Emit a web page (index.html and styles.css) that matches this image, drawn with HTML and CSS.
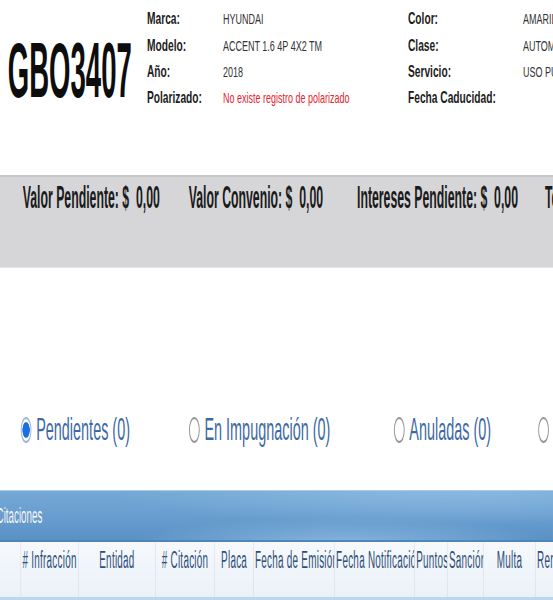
FILE: index.html
```html
<!DOCTYPE html>
<html lang="es">
<head>
<meta charset="utf-8">
<title>Consulta de vehículo</title>
<link rel="stylesheet" href="styles.css">
</head>
<body>
<section class="info">
  <div class="plate-col"><span class="plate">GBO3407</span></div>
  <dl class="specs">
    <dt>Marca:</dt><dd>HYUNDAI</dd><dt>Color:</dt><dd>AMARILLO</dd>
    <dt>Modelo:</dt><dd>ACCENT 1.6 4P 4X2 TM</dd><dt>Clase:</dt><dd>AUTOMOVIL</dd>
    <dt>Año:</dt><dd>2018</dd><dt>Servicio:</dt><dd>USO PUBLICO</dd>
    <dt>Polarizado:</dt><dd class="warn">No existe registro de polarizado</dd><dt>Fecha Caducidad:</dt><dd></dd>
  </dl>
</section>

<section class="totals">
  <span>Valor Pendiente: $&nbsp; 0,00</span>
  <span>Valor Convenio: $&nbsp; 0,00</span>
  <span>Intereses Pendiente: $&nbsp; 0,00</span>
  <span>Total Pendiente: $&nbsp; 0,00</span>
</section>

<section class="filters">
  <label class="option"><span class="radio on"></span>Pendientes (0)</label>
  <label class="option"><span class="radio"></span>En Impugnación (0)</label>
  <label class="option"><span class="radio"></span>Anuladas (0)</label>
  <label class="option"><span class="radio"></span>Pagadas (0)</label>
</section>

<section class="citations">
  <div class="cit-title">Citaciones</div>
  <div class="cit-head">
    <span></span>
    <span># Infracción</span>
    <span>Entidad</span>
    <span># Citación</span>
    <span>Placa</span>
    <span>Fecha de Emisión</span>
    <span>Fecha Notificación</span>
    <span>Puntos</span>
    <span>Sanción</span>
    <span>Multa</span>
    <span>Remisión</span>
  </div>
</section>
</body>
</html>
```

FILE: styles.css
```css
html, body {
  margin: 0;
  padding: 0;
  overflow: hidden;
  background: #ffffff;
}

body {
  width: 553px;
  font-family: "Liberation Sans", Arial, sans-serif;
}

/* ---------- vehicle info ---------- */
.info {
  display: flex;
  width: calc(100% / 0.6);
  height: 175px;
  transform: scaleX(0.6);
  transform-origin: 0 0;
}

.plate-col {
  flex: none;
  width: 245px;
  box-sizing: border-box;
  padding: 31.8px 0 0 13.3px;
}

.plate {
  display: inline-block;
  font-weight: 700;
  font-size: 77px;
  line-height: 77px;
  color: #0d0d0d;
  transform: scaleX(0.596);
  transform-origin: 0 0;
  white-space: nowrap;
}

.specs {
  display: grid;
  grid-template-columns: 126.7px 308.3px 191.7px 1fr;
  grid-auto-rows: 26.3px;
  align-items: baseline;
  margin: 0;
  padding-top: 6.4px;
  white-space: nowrap;
}

.specs dt {
  font-weight: 700;
  font-size: 17px;
  line-height: 26.3px;
  color: #1c1c1c;
}

.specs dd {
  margin: 0;
  font-size: 15px;
  line-height: 26.3px;
  color: #333333;
}

.specs dd.warn {
  color: #e5252e;
}

/* ---------- totals band ---------- */
.totals {
  display: grid;
  grid-template-columns: 415px 420.75px 470px auto;
  width: calc(100% / 0.4);
  height: 93px;
  box-sizing: border-box;
  padding: 6.3px 0 0 56.75px;
  background: #d6d6d8;
  border-top: 2px solid #c6c6c8;
  border-bottom: 1px solid #e6e6e8;
  font-weight: 700;
  font-size: 30.7px;
  line-height: 30.7px;
  color: #1b1b1b;
  white-space: nowrap;
  transform: scaleX(0.4);
  transform-origin: 0 0;
}

/* ---------- filters ---------- */
.filters {
  display: grid;
  grid-template-columns: 358px 436px 307px auto;
  align-items: center;
  width: calc(100% / 0.47);
  height: 222px;
  box-sizing: border-box;
  padding: 144px 0 42px 44px;
  font-size: 30.7px;
  line-height: 36px;
  color: #3e6aa3;
  white-space: nowrap;
  transform: scaleX(0.47);
  transform-origin: 0 0;
}

.option {
  display: flex;
  align-items: center;
  gap: 10px;
}

.radio {
  flex: none;
  width: 23px;
  height: 26px;
  box-sizing: border-box;
  border-radius: 50%;
  border: 2px solid #959595;
  background: #ffffff;
}

.radio.on {
  border-color: #9ab6da;
  background: radial-gradient(circle, #1b6fe0 0 50%, #ffffff 58%);
}

/* ---------- citations table ---------- */
.citations {
  width: calc(100% / 0.43);
  transform: scaleX(0.43);
  transform-origin: 0 0;
}

.cit-title {
  height: 52px;
  box-sizing: border-box;
  padding-top: 11.4px;
  margin-left: -8px;
  border-top: 1px solid #a9cae8;
  border-bottom: 2px solid #4f85bb;
  background:
    radial-gradient(ellipse 38% 55% at 62% 108%, rgba(140, 186, 226, 0.9), rgba(140, 186, 226, 0) 100%),
    radial-gradient(ellipse 60% 70% at 80% 0%, rgba(146, 192, 230, 0.7), rgba(146, 192, 230, 0) 100%),
    linear-gradient(180deg, #75a8d5 0%, #6a9fd0 45%, #5a91c5 100%);
  font-size: 22.8px;
  line-height: 26px;
  color: #ffffff;
  text-shadow: 0 0 1px rgba(40, 80, 130, 0.6);
  white-space: nowrap;
}

.cit-head {
  display: grid;
  grid-template-columns: 47.7px 134.4px 178.8px 137.9px 90.3px 188.6px 186.3px 76.2px 83.5px 121.4px 60px;
  height: 55px;
  background: linear-gradient(180deg, #f6f9fc 0%, #eaf1f8 100%);
  border-bottom: 3px solid #bcd6ec;
  font-size: 23px;
  line-height: 26px;
  letter-spacing: 0.6px;
  color: #2f4f77;
}

.cit-head span {
  padding: 5.4px 3px 0;
  text-align: center;
  overflow: hidden;
  white-space: nowrap;
  border-left: 1px solid #c9d7e6;
}

.cit-head span:first-child {
  border-left: none;
}
```
